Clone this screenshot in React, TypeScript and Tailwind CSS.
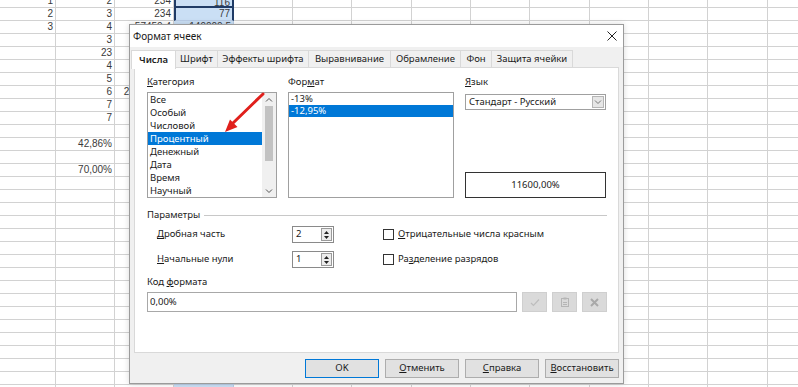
import React from "react";

const colW = ["w-[56px]", "w-[59px]", "w-[59px]", "w-[60px]", "w-[59px]", "w-[59px]", "w-[60px]", "w-[59px]", "w-[59px]", "w-[60px]", "w-[59px]", "w-[59px]", "w-[60px]", "w-[40px]"];

const data: string[][] = [
  ["1", "2", "234", "116"],
  ["2", "3", "234", "77"],
  ["3", "4", "57450,4", "149000,5"],
  ["", "3"],
  ["", "23"],
  ["", "4"],
  ["", "5"],
  ["", "6", "234567,89"],
  ["", "7"],
  ["", "7"],
  [],
  ["", "42,86%"],
  [],
  ["", "70,00%"],
];

function Sheet() {
  const rows = Array.from({ length: 31 }, (_, i) => data[i] ?? []);
  return (
    <div className="-mt-[5px] font-['Liberation_Sans',Arial,sans-serif] text-[10px] text-[#3a3a3a]">
      {rows.map((r, i) => (
        <div key={i} className="flex h-[13px]">
          {colW.map((w, j) => {
            let cls = "border-r border-b border-[#d2d2d2]";
            if (j === 3) {
              cls = "border-r border-b border-[#b9cde6] bg-[#cadff5]";
              if (i === 0) cls = "border-2 border-[#1f3b66] bg-[#cadff5]";
              if (i === 1) cls = "border-x-2 border-b border-[#1f3b66] border-b-[#b9cde6] bg-[#cadff5]";
            }
            return (
              <div key={j} className={`${w} shrink-0 h-full ${cls} text-right pr-[2px] leading-[12px] whitespace-nowrap`}>
                {r[j] ?? ""}
              </div>
            );
          })}
        </div>
      ))}
    </div>
  );
}

function U({ children }: { children: React.ReactNode }) {
  return <span className="underline underline-offset-[1px]">{children}</span>;
}

function ChevUp() {
  return (
    <svg width="8" height="5" viewBox="0 0 8 5">
      <path d="M1 4.5 L4 1.5 L7 4.5" fill="none" stroke="#555" strokeWidth="1" />
    </svg>
  );
}

function ChevDown({ color = "#555" }: { color?: string }) {
  return (
    <svg width="8" height="5" viewBox="0 0 8 5">
      <path d="M1 0.5 L4 3.5 L7 0.5" fill="none" stroke={color} strokeWidth="1" />
    </svg>
  );
}

function Spin({ value }: { value: string }) {
  return (
    <div className="w-[42px] h-[17px] border border-[#8a8a8a] bg-white flex items-center justify-between pl-[3px] pr-[1px]">
      <span>{value}</span>
      <div className="w-[11px] h-[13px] border border-[#9a9a9a] bg-[#ececec] flex flex-col items-center justify-center gap-[2px]">
        <svg width="5" height="3" viewBox="0 0 5 3"><path d="M0 3 L2.5 0 L5 3 Z" fill="#222" /></svg>
        <svg width="5" height="3" viewBox="0 0 5 3"><path d="M0 0 L2.5 3 L5 0 Z" fill="#222" /></svg>
      </div>
    </div>
  );
}

function Check({ children }: { children: React.ReactNode }) {
  return (
    <div className="flex items-center gap-[4px]">
      <div className="w-[11px] h-[11px] border border-[#333] bg-white" />
      <span>{children}</span>
    </div>
  );
}

const categories = ["Все", "Особый", "Числовой", "Процентный", "Денежный", "Дата", "Время", "Научный"];
const tabs = [
  { t: "Числа", w: "w-[45px]" },
  { t: "Шрифт", w: "w-[42px]" },
  { t: "Эффекты шрифта", w: "w-[91px]" },
  { t: "Выравнивание", w: "w-[82px]" },
  { t: "Обрамление", w: "w-[70px]" },
  { t: "Фон", w: "w-[31px]" },
  { t: "Защита ячейки", w: "w-[81px]" },
];

function Dialog() {
  return (
    <div className="absolute left-[129px] top-[24px] w-[495px] h-[360px] border border-[#9b9b9b] bg-[#f0f0f0] flex flex-col font-['Noto_Sans',sans-serif] text-[9.5px] text-[#1a1a1a] shadow-[0_0_6px_rgba(0,0,0,0.15)]">
      <div className="h-[22px] bg-white flex items-center justify-between pl-[3px] pr-[6px]">
        <span className="text-[10px]">Формат ячеек</span>
        <svg width="10" height="10" viewBox="0 0 10 10">
          <path d="M0.5 0.5 L9.5 9.5 M9.5 0.5 L0.5 9.5" stroke="#222" strokeWidth="1" />
        </svg>
      </div>
      <div className="flex pl-[1px] pt-[3px] h-[21px]">
        {tabs.map((tab, i) => (
          <div
            key={tab.t}
            className={`${tab.w} flex items-center justify-center border-t border-r border-[#d9d9d9] ${i === 0 ? "bg-white border-l font-semibold relative z-10 h-[19px]" : "bg-[#f0f0f0] h-[18px]"}`}
          >
            {tab.t}
          </div>
        ))}
      </div>
      <div className="mx-[4px] -mt-[1px] h-[286px] bg-white border border-[#d9d9d9] pl-[12px] pr-[11px] pt-[7px] relative">
        <div className="flex gap-[11px]">
          <div className="w-[130px]">
            <div className="h-[14px] leading-[14px]"><U>К</U>атегория</div>
            <div className="mt-[3px] h-[106px] border border-[#a0a0a0] flex">
              <div className="flex-1">
                {categories.map((c, i) => (
                  <div key={c} className={`h-[13px] leading-[13px] pl-[2px] ${i === 3 ? "bg-[#0078d7] text-white" : ""}`}>{c}</div>
                ))}
              </div>
              <div className="w-[14px] bg-[#f0f0f0] flex flex-col items-center">
                <div className="h-[12px] flex items-center"><ChevUp /></div>
                <div className="w-[8px] h-[55px] bg-[#c2c2c2] mt-[1px]" />
                <div className="flex-1" />
                <div className="h-[12px] flex items-center"><ChevDown /></div>
              </div>
            </div>
          </div>
          <div className="w-[166px]">
            <div className="h-[14px] leading-[14px]">Фор<U>м</U>ат</div>
            <div className="mt-[3px] h-[106px] border border-[#a0a0a0]">
              <div className="h-[12px] leading-[12px] pl-[2px]">-13%</div>
              <div className="h-[12px] leading-[12px] pl-[2px] bg-[#0078d7] text-white">-12,95%</div>
            </div>
          </div>
          <div className="w-[141px]">
            <div className="h-[14px] leading-[14px]"><U>Я</U>зык</div>
            <div className="mt-[3px] h-[106px] flex flex-col justify-between">
              <div className="mt-[2px] h-[16px] border border-[#a0a0a0] flex items-center justify-between pl-[3px] pr-[1px]">
                <span>Стандарт - Русский</span>
                <div className="w-[12px] h-[12px] border border-[#b5b5b5] bg-[#e6e6e6] flex items-center justify-center">
                  <ChevDown color="#777" />
                </div>
              </div>
              <div className="h-[26px] border border-[#333] flex items-center justify-center">11600,00%</div>
            </div>
          </div>
        </div>

        <div className="mt-[10px] h-[14px] flex items-center gap-[4px]">
          <span>Параметры</span>
          <div className="flex-1 border-t border-[#c8c8c8]" />
        </div>
        <div className="mt-[4px] h-[17px] flex items-center">
          <div className="w-[145px] pl-[10px]"><U>Д</U>робная часть</div>
          <Spin value="2" />
          <div className="ml-[49px]"><Check><U>О</U>трицательные числа красным</Check></div>
        </div>
        <div className="mt-[8px] h-[17px] flex items-center">
          <div className="w-[145px] pl-[10px]"><U>Н</U>ачальные нули</div>
          <Spin value="1" />
          <div className="ml-[49px]"><Check>Ра<U>з</U>деление разрядов</Check></div>
        </div>
        <div className="mt-[7px] h-[14px] leading-[14px]">Код <U>ф</U>ормата</div>
        <div className="mt-[3px] flex gap-[5px] h-[20px]">
          <div className="flex-1 border border-[#a8a8a8] flex items-center pl-[2px]">0,00%</div>
          <div className="w-[25px] bg-[#dadada] border border-[#cfcfcf] flex items-center justify-center">
            <svg width="10" height="9" viewBox="0 0 10 9"><path d="M1 5 L3.5 7.5 L9 1.5" fill="none" stroke="#bdbdbd" strokeWidth="1.2" /></svg>
          </div>
          <div className="w-[25px] bg-[#dadada] border border-[#cfcfcf] flex items-center justify-center">
            <svg width="8" height="10" viewBox="0 0 8 10">
              <rect x="0.5" y="1.5" width="7" height="8" fill="none" stroke="#b5b5b5" />
              <rect x="2.5" y="0.5" width="3" height="2" fill="#b5b5b5" />
              <path d="M2 5.5 H6 M2 7.5 H6" stroke="#b5b5b5" />
            </svg>
          </div>
          <div className="w-[25px] bg-[#dadada] border border-[#cfcfcf] flex items-center justify-center">
            <svg width="9" height="9" viewBox="0 0 9 9"><path d="M1 1 L8 8 M8 1 L1 8" stroke="#a9a9a9" strokeWidth="2" /></svg>
          </div>
        </div>
      </div>
      <div className="flex justify-end gap-[6px] pr-[4px] pt-[6px]">
        <div className="w-[74px] h-[19px] bg-[#e1e1e1] border border-[#0078d7] flex items-center justify-center">OK</div>
        <div className="w-[74px] h-[19px] bg-[#e1e1e1] border border-[#adadad] flex items-center justify-center"><U>О</U>тменить</div>
        <div className="w-[74px] h-[19px] bg-[#e1e1e1] border border-[#adadad] flex items-center justify-center"><U>С</U>правка</div>
        <div className="w-[74px] h-[19px] bg-[#e1e1e1] border border-[#adadad] flex items-center justify-center"><U>В</U>осстановить</div>
      </div>
    </div>
  );
}

export default function App() {
  return (
    <div className="relative w-[798px] h-[387px] overflow-hidden bg-white">
      <Sheet />
      <Dialog />
      <svg className="absolute left-[218px] top-[88px] pointer-events-none" width="50" height="50" viewBox="218 88 50 50">
        <path d="M263 94 L232 124" stroke="#e0201c" strokeWidth="3" strokeLinecap="round" />
        <path d="M225 132 L237.5 127 L230 119.5 Z" fill="#e0201c" />
      </svg>
    </div>
  );
}
